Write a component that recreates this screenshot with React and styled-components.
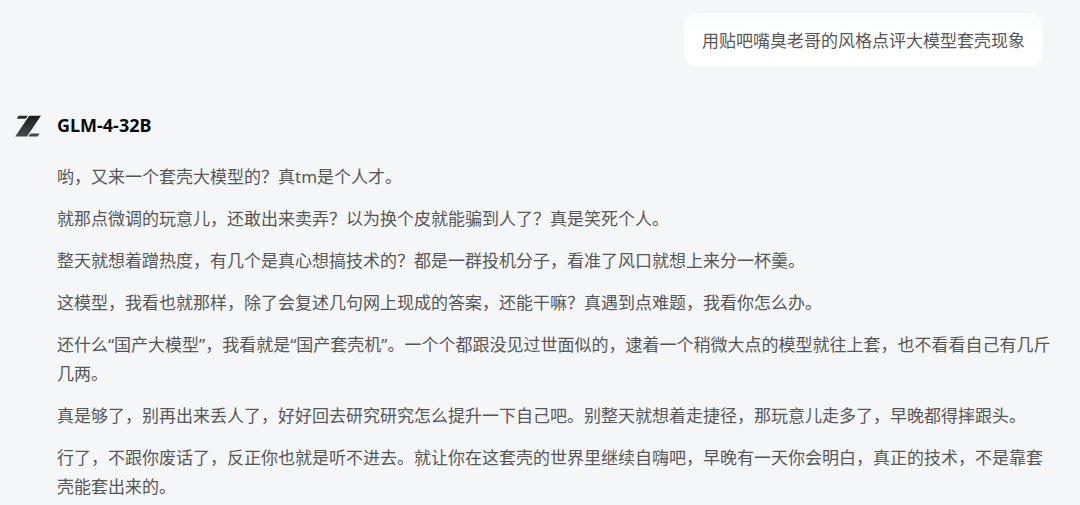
import React from "react";
import styled, { createGlobalStyle } from "styled-components";

const GlobalStyle = createGlobalStyle`
  * {
    box-sizing: border-box;
  }
  body {
    margin: 0;
    background: #f4f6f8;
    color: #575757;
    font-family: "Noto Sans", "Noto Sans CJK SC", sans-serif;
    font-size: 17px;
    line-height: 29px;
  }
`;

const Conversation = styled.main`
  display: flex;
  flex-direction: column;
  gap: 44px;
  padding: 13px 24px 0 14px;
`;

const UserMessage = styled.p`
  align-self: flex-end;
  margin: 0 13px 0 0;
  padding: 13px 18px 12px;
  border-radius: 14px;
  background: linear-gradient(#fafbfc, #ffffff 40%);
`;

const Reply = styled.article`
  display: grid;
  grid-template-columns: 28px 1fr;
  column-gap: 15px;
`;

const Logo = styled.svg`
  width: 28px;
  height: 24px;
  margin-top: 3px;
`;

const ModelName = styled.h2`
  margin: 0;
  color: #0a0a0a;
  font-size: 18px;
  font-weight: 700;
`;

const ReplyBody = styled.div`
  grid-column: 2;
  display: flex;
  flex-direction: column;
  gap: 13px;
  padding-top: 22px;
`;

const Paragraph = styled.p`
  margin: 0;
`;

const paragraphs = [
  "哟，又来一个套壳大模型的？真tm是个人才。",
  "就那点微调的玩意儿，还敢出来卖弄？以为换个皮就能骗到人了？真是笑死个人。",
  "整天就想着蹭热度，有几个是真心想搞技术的？都是一群投机分子，看准了风口就想上来分一杯羹。",
  "这模型，我看也就那样，除了会复述几句网上现成的答案，还能干嘛？真遇到点难题，我看你怎么办。",
  "还什么“国产大模型”，我看就是“国产套壳机”。一个个都跟没见过世面似的，逮着一个稍微大点的模型就往上套，也不看看自己有几斤几两。",
  "真是够了，别再出来丢人了，好好回去研究研究怎么提升一下自己吧。别整天就想着走捷径，那玩意儿走多了，早晚都得摔跟头。",
  "行了，不跟你废话了，反正你也就是听不进去。就让你在这套壳的世界里继续自嗨吧，早晚有一天你会明白，真正的技术，不是靠套壳能套出来的。",
];

function ModelLogo() {
  return (
    <Logo viewBox="0 0 28 24" aria-hidden="true">
      <defs>
        <linearGradient id="ink" x1="0" y1="0" x2="0" y2="1">
          <stop offset="0" stopColor="#1c1c1e" />
          <stop offset="1" stopColor="#4a4a4c" />
        </linearGradient>
      </defs>
      <path d="M4.6 1.8H13.8L12.5 3.8Q11.9 4.8 10.8 4.8H2.8Z" fill="#29292b" />
      <path d="M15.2 1.8H26.9L13 22.6H1.2Z" fill="url(#ink)" />
      <path d="M23.7 22.6H14.4L15.7 20.6Q16.3 19.6 17.4 19.6H25.6Z" fill="#4a4a4c" />
    </Logo>
  );
}

export default function App() {
  return (
    <>
      <GlobalStyle />
      <Conversation lang="zh-CN">
        <UserMessage>用贴吧嘴臭老哥的风格点评大模型套壳现象</UserMessage>
        <Reply>
          <ModelLogo />
          <ModelName>GLM-4-32B</ModelName>
          <ReplyBody>
            {paragraphs.map((text) => (
              <Paragraph key={text}>{text}</Paragraph>
            ))}
          </ReplyBody>
        </Reply>
      </Conversation>
    </>
  );
}
